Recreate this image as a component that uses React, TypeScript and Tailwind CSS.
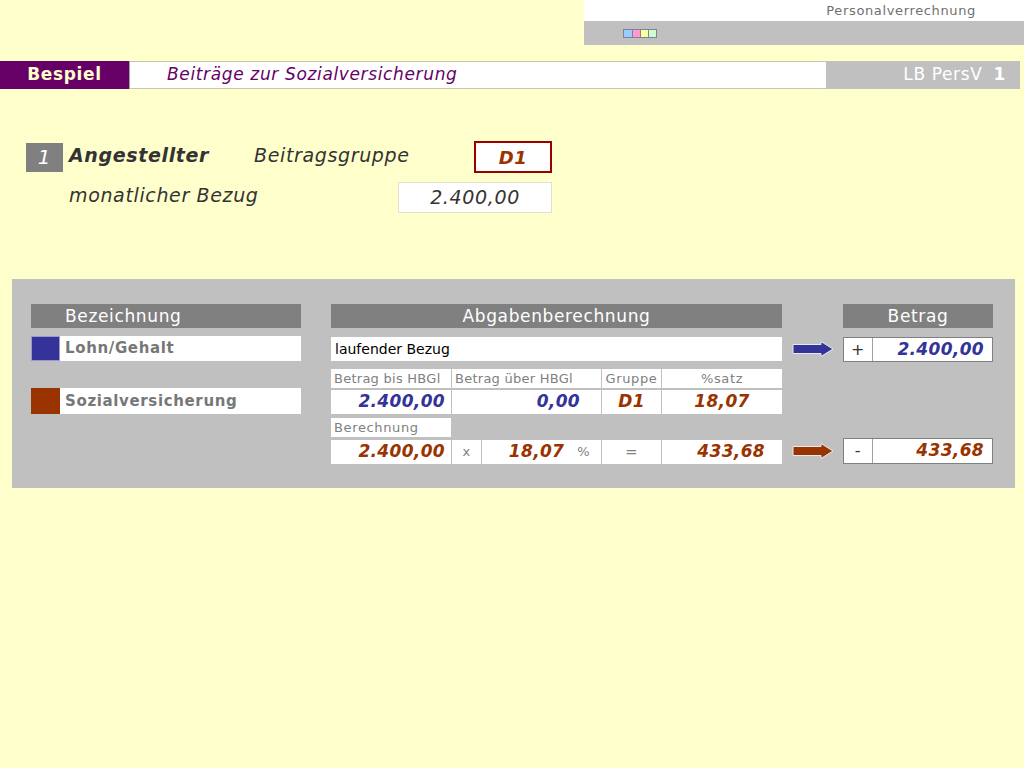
import React from "react";

const font = { fontFamily: '"DejaVu Sans", Verdana, sans-serif' };

function Arrow({ color }: { color: string }) {
  return (
    <svg width="42" height="16" viewBox="0 0 42 16">
      <path d="M1 3.5 H29 V0.5 L41 8 L29 15.5 V12.5 H1 Z" fill={color} stroke="#e8e8f0" strokeWidth="1" />
    </svg>
  );
}

function Cell({ className = "", children }: { className?: string; children?: React.ReactNode }) {
  return <div className={"bg-white flex items-center " + className}>{children}</div>;
}

export default function App() {
  return (
    <div className="min-h-screen w-[1024px] bg-[#ffffcc] text-[#333] tracking-[0.04em]" style={font}>
      {/* top right */}
      <div className="flex justify-end">
        <div className="w-[440px]">
          <div className="h-[21px] bg-white flex items-center justify-end pr-[48px] text-[13px] text-[#707070]">
            Personalverrechnung
          </div>
          <div className="h-[24px] bg-[#c0c0c0] flex items-center pl-[39px]">
            <div className="flex border border-[#8080a0]">
              <div className="w-[8px] h-[7px] bg-[#99ccff]" />
              <div className="w-[8px] h-[7px] bg-[#ff99cc] border-l border-[#8080a0]" />
              <div className="w-[8px] h-[7px] bg-[#ffff99] border-l border-[#8080a0]" />
              <div className="w-[8px] h-[7px] bg-[#ccffcc] border-l border-[#8080a0]" />
            </div>
          </div>
        </div>
      </div>

      {/* title bar */}
      <div className="mt-[16px] flex h-[28px]">
        <div className="w-[130px] bg-[#660066] flex items-center justify-center text-[17px] font-bold text-[#ffffcc] border-r border-[#a0a0a0]">
          Bespiel
        </div>
        <div className="w-[696px] bg-white border-y border-[#c8c8b0] flex items-center pl-[37px] text-[17px] italic text-[#660066]">
          Beiträge zur Sozialversicherung
        </div>
        <div className="w-[194px] bg-[#c0c0c0] flex items-center justify-end pr-[14px] text-[17px] text-white">
          LB PersV<span className="font-bold ml-[11px]">1</span>
        </div>
      </div>

      {/* employee */}
      <div className="mt-[52px] pl-[26px]">
        <div className="flex items-center h-[32px]">
          <div className="w-[37px] h-[29px] bg-[#808080] flex items-center justify-center text-[20px] italic text-white">1</div>
          <div className="ml-[6px] w-[185px] text-[19px] font-bold italic text-[#333] -mt-[4px]">Angestellter</div>
          <div className="w-[220px] text-[19px] italic text-[#333] -mt-[4px]">Beitragsgruppe</div>
          <div className="w-[78px] h-[32px] bg-white border-2 border-[#990000] flex items-center justify-center text-[18px] font-bold italic text-[#993300]">
            D1
          </div>
        </div>
        <div className="flex items-center mt-[9px] h-[31px]">
          <div className="ml-[43px] w-[329px] text-[19px] italic text-[#333] -mt-[4px]">monatlicher Bezug</div>
          <div className="w-[154px] h-[31px] bg-white border border-[#e0e0d0] flex items-center justify-center text-[19px] italic text-[#333]">
            2.400,00
          </div>
        </div>
      </div>

      {/* grey panel */}
      <div className="mt-[66px] ml-[12px] w-[1003px] h-[209px] bg-[#c0c0c0] pt-[25px] pl-[19px] flex">
        {/* Bezeichnung */}
        <div className="w-[270px] flex flex-col">
          <div className="h-[24px] bg-[#808080] text-white text-[17px] flex items-center pl-[34px] pt-[2px]">Bezeichnung</div>
          <div className="mt-[8px] h-[25px] bg-white flex items-center">
            <div className="w-[29px] h-[25px] bg-[#333399] border border-[#9999cc]" />
            <span className="ml-[5px] text-[15px] font-bold text-[#777]">Lohn/Gehalt</span>
          </div>
          <div className="mt-[27px] h-[26px] bg-white flex items-center">
            <div className="w-[29px] h-[26px] bg-[#993300]" />
            <span className="ml-[5px] text-[15px] font-bold text-[#777]">Sozialversicherung</span>
          </div>
        </div>

        {/* Abgabenberechnung */}
        <div className="ml-[30px] w-[451px] flex flex-col">
          <div className="h-[24px] bg-[#808080] text-white text-[17px] flex items-center justify-center pt-[1px]">Abgabenberechnung</div>
          <Cell className="mt-[9px] h-[24px] pl-[4px] text-[14px] text-black tracking-normal">laufender Bezug</Cell>
          <div className="mt-[8px] flex gap-[1px] h-[19px] text-[13px] text-[#808080]">
            <Cell className="w-[120px] pl-[3px] tracking-[0.02em]">Betrag bis HBGl</Cell>
            <Cell className="w-[149px] pl-[3px] tracking-[0.02em]">Betrag über HBGl</Cell>
            <Cell className="w-[59px] justify-center">Gruppe</Cell>
            <Cell className="w-[120px] justify-center">%satz</Cell>
          </div>
          <div className="mt-[2px] flex gap-[1px] h-[24px] text-[17px] font-bold italic tracking-[0.02em]">
            <Cell className="w-[120px] justify-end pr-[6px] text-[#333399]">2.400,00</Cell>
            <Cell className="w-[149px] justify-end pr-[21px] text-[#333399]">0,00</Cell>
            <Cell className="w-[59px] justify-center text-[#993300]">D1</Cell>
            <Cell className="w-[120px] justify-center text-[#993300]">18,07</Cell>
          </div>
          <Cell className="mt-[4px] w-[120px] h-[19px] pl-[3px] text-[13px] text-[#808080]">Berechnung</Cell>
          <div className="mt-[3px] flex gap-[1px] h-[24px] text-[17px] font-bold italic text-[#993300] tracking-[0.02em]">
            <Cell className="w-[120px] justify-end pr-[6px]">2.400,00</Cell>
            <Cell className="w-[29px] justify-center text-[13px] font-normal not-italic text-[#808080]">x</Cell>
            <Cell className="w-[119px] justify-end pr-[11px]">
              18,07
              <span className="ml-[13px] text-[13px] font-normal not-italic text-[#808080]">%</span>
            </Cell>
            <Cell className="w-[59px] justify-center text-[15px] font-normal not-italic text-[#808080]">=</Cell>
            <Cell className="w-[120px] justify-end pr-[17px]">433,68</Cell>
          </div>
        </div>

        {/* arrows */}
        <div className="w-[61px] flex flex-col pl-[10px]">
          <div className="mt-[37px]">
            <Arrow color="#333399" />
          </div>
          <div className="mt-[86px]">
            <Arrow color="#993300" />
          </div>
        </div>

        {/* Betrag */}
        <div className="w-[150px] flex flex-col">
          <div className="h-[24px] bg-[#808080] text-white text-[17px] flex items-center justify-center pt-[1px]">Betrag</div>
          <div className="mt-[9px] h-[25px] flex border border-[#808080] bg-white">
            <div className="w-[29px] border-r border-[#a0a0a0] flex items-center justify-center text-[16px] text-[#333]">+</div>
            <div className="flex-1 flex items-center justify-end pr-[8px] text-[17px] font-bold italic text-[#333399] tracking-[0.02em]">2.400,00</div>
          </div>
          <div className="mt-[76px] h-[26px] flex border border-[#808080] bg-white">
            <div className="w-[29px] border-r border-[#a0a0a0] flex items-center justify-center text-[16px] text-[#333]">-</div>
            <div className="flex-1 flex items-center justify-end pr-[8px] text-[17px] font-bold italic text-[#993300] tracking-[0.02em]">433,68</div>
          </div>
        </div>
      </div>
    </div>
  );
}
